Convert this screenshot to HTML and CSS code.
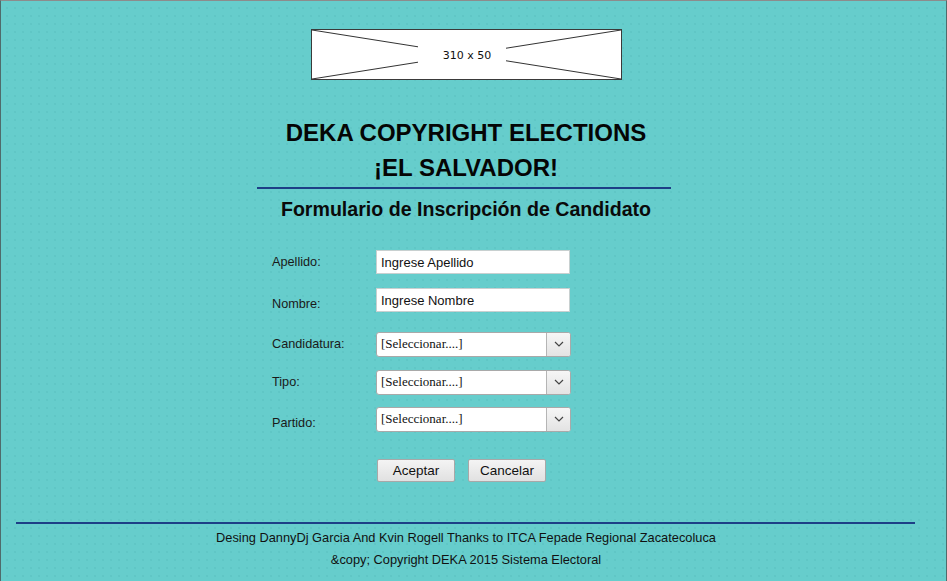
FILE: index.html
```html
<!DOCTYPE html>
<html lang="es">
<head>
<meta charset="utf-8">
<title>DEKA Copyright Elections</title>
<link rel="stylesheet" href="styles.css">
</head>
<body>
<div class="frame">
  <div class="page">
    <div class="banner">
      <svg class="banner-svg" width="309" height="49" viewBox="0 0 309 49">
        <line x1="0" y1="0" x2="309" y2="49" stroke="#333" stroke-width="1"/>
        <line x1="0" y1="49" x2="309" y2="0" stroke="#333" stroke-width="1"/>
        <rect x="106" y="14" width="88" height="21" fill="#fff"/>
        <text x="155" y="29" text-anchor="middle" class="banner-text">310 x 50</text>
      </svg>
    </div>

    <h1 class="title">DEKA COPYRIGHT ELECTIONS<br>¡EL SALVADOR!</h1>
    <hr class="rule-title">
    <h2 class="subtitle">Formulario de Inscripción de Candidato</h2>

    <form class="form">
      <div class="row row-1">
        <label class="lbl">Apellido:</label>
        <input class="field" type="text" value="Ingrese Apellido">
      </div>
      <div class="row row-2">
        <label class="lbl lbl-low">Nombre:</label>
        <input class="field" type="text" value="Ingrese Nombre">
      </div>
      <div class="row row-3">
        <label class="lbl">Candidatura:</label>
        <div class="select"><span class="select-text">[Seleccionar....]</span><span class="select-btn"><svg width="10" height="6" viewBox="0 0 10 6"><path d="M1 1 L5 5 L9 1" fill="none" stroke="#444" stroke-width="1.2"/></svg></span></div>
      </div>
      <div class="row row-4">
        <label class="lbl">Tipo:</label>
        <div class="select"><span class="select-text">[Seleccionar....]</span><span class="select-btn"><svg width="10" height="6" viewBox="0 0 10 6"><path d="M1 1 L5 5 L9 1" fill="none" stroke="#444" stroke-width="1.2"/></svg></span></div>
      </div>
      <div class="row row-5">
        <label class="lbl lbl-low">Partido:</label>
        <div class="select"><span class="select-text">[Seleccionar....]</span><span class="select-btn"><svg width="10" height="6" viewBox="0 0 10 6"><path d="M1 1 L5 5 L9 1" fill="none" stroke="#444" stroke-width="1.2"/></svg></span></div>
      </div>
      <div class="buttons">
        <button type="button" class="btn">Aceptar</button>
        <button type="button" class="btn">Cancelar</button>
      </div>
    </form>

    <hr class="rule-footer">
    <footer class="footer">
      <p class="foot-line">Desing DannyDj Garcia And Kvin Rogell Thanks to ITCA Fepade Regional Zacatecoluca</p>
      <p class="foot-line">&amp;copy; Copyright DEKA 2015 Sistema Electoral</p>
    </footer>
  </div>
</div>
</body>
</html>
```

FILE: styles.css
```css
html, body {
  margin: 0;
  padding: 0;
  width: 947px;
  height: 581px;
  overflow: hidden;
}

body {
  font-family: "Liberation Sans", Arial, sans-serif;
  color: #111;
}

.frame {
  box-sizing: border-box;
  width: 947px;
  height: 581px;
  border-top: 1px solid #8c8c8c;
  border-left: 1px solid #4f6b6b;
  border-right: 1px solid #4f6b6b;
  background-color: #66cdcc;
  background-image: radial-gradient(circle, #60c6c5 0.7px, transparent 1px);
  background-size: 8px 8px;
  background-position: 2px 3px;
}

.page {
  width: 930px;
  display: flex;
  flex-direction: column;
}

.banner {
  align-self: flex-start;
  margin: 28px 0 0 310px;
  width: 309px;
  height: 49px;
  background: #fff;
  border: 1px solid #3a3a3a;
  line-height: 0;
}

.banner-text {
  font-family: "DejaVu Sans", Tahoma, sans-serif;
  font-size: 11px;
  fill: #111;
}

.title {
  margin: 35px 0 0;
  text-align: center;
  font-size: 24px;
  font-weight: bold;
  line-height: 35px;
  color: #050505;
}

.rule-title {
  margin: 2px 0 0 256px;
  width: 414px;
  height: 2px;
  border: 0;
  background: #1d3f86;
}

.subtitle {
  margin: 8px 0 0;
  text-align: center;
  font-size: 19.6px;
  font-weight: bold;
  line-height: 24px;
  color: #0a0a0a;
}

.form {
  margin: 29px 0 0 271px;
  display: flex;
  flex-direction: column;
}

.row {
  display: flex;
  align-items: center;
  height: 24px;
}

.row-2 { margin-top: 14px; }
.row-3 { margin-top: 20px; }
.row-4 { margin-top: 14px; }
.row-5 { margin-top: 13px; }

.lbl {
  width: 104px;
  font-size: 12.7px;
  color: #1a1a1a;
}

.lbl-low {
  position: relative;
  top: 4px;
}

.field {
  box-sizing: border-box;
  width: 194px;
  height: 24px;
  border: 1px solid #c8d0d0;
  background: #fff;
  padding: 0 4px;
  font-family: "Liberation Sans", Arial, sans-serif;
  font-size: 13px;
  color: #111;
  outline: none;
}

.select {
  box-sizing: border-box;
  width: 195px;
  height: 25px;
  display: flex;
  align-items: stretch;
  background: #fff;
  border: 1px solid #a9a9a9;
  border-radius: 3px;
}

.select-text {
  flex: 1;
  display: flex;
  align-items: center;
  padding-left: 4px;
  font-family: "Liberation Serif", "Times New Roman", serif;
  font-size: 13px;
  color: #111;
}

.select-btn {
  width: 23px;
  display: flex;
  align-items: center;
  justify-content: center;
  border-left: 1px solid #b5b5b5;
  border-radius: 0 2px 2px 0;
  background: linear-gradient(#f6f6f6, #e3e3e3);
}

.buttons {
  display: flex;
  gap: 13px;
  margin: 28px 0 0 105px;
}

.btn {
  box-sizing: border-box;
  width: 78px;
  height: 23px;
  padding: 0;
  border: 1px solid #a8a8a8;
  border-radius: 2px;
  background: linear-gradient(#f4f4f4, #e1e1e1);
  font-family: "Liberation Sans", Arial, sans-serif;
  font-size: 13.5px;
  color: #111;
}

.rule-footer {
  margin: 40px 0 0 15px;
  width: 899px;
  height: 2px;
  border: 0;
  background: #1d3f86;
}

.footer {
  text-align: center;
  font-size: 12.8px;
  color: #111;
}

.foot-line {
  margin: 0;
  line-height: 22px;
}

.foot-line:first-child {
  margin-top: 3px;
}
```
